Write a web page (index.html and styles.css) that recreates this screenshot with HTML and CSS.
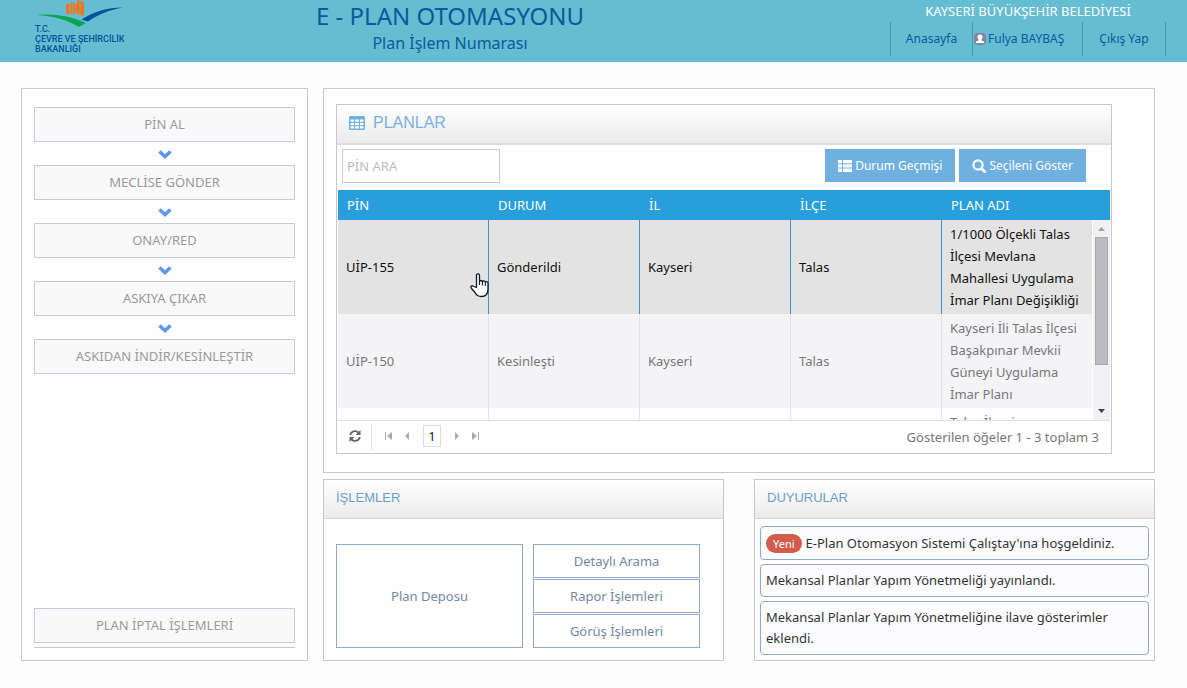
FILE: index.html
```html
<!DOCTYPE html>
<html lang="tr">
<head>
<meta charset="utf-8">
<meta name="viewport" content="width=device-width, initial-scale=1">
<title>E - Plan Otomasyonu</title>
<link rel="stylesheet" href="styles.css">
</head>
<body>
<header class="topbar">
  <a class="logo" href="#">
    <svg class="logo-mark" viewBox="0 0 90 27" width="90" height="27" aria-hidden="true">
      <path fill="#ee7623" d="M31 4.500l3-1v10l-3 1zM36 2l4 1v12l-4-1zM34.500 4h1v10h-1zM42 0l7 2v14l-7-2zM40.500 4h1.500v9h-1.500z"/>
      <path stroke="#65bdd2" stroke-width=".7" d="M45 0v16M37.800 2v13" fill="none"/>
      <path fill="#0ba551" d="M2 15c18-1.500 33 1 49 8l-7 4C33 20.500 20 16 2 15z"/>
      <path fill="#04529c" d="M46.500 19.500C59 11.500 72 7.500 88 7.500 74 10 64 14 53 21.500z"/>
    </svg>
    <span>T.C.</span>
    <span>ÇEVRE VE ŞEHİRCİLİK</span>
    <span>BAKANLIĞI</span>
  </a>
  <div class="titles">
    <h1>E - PLAN OTOMASYONU</h1>
    <p>Plan İşlem Numarası</p>
  </div>
  <div class="account">
    <p>KAYSERİ BÜYÜKŞEHİR BELEDİYESİ</p>
    <nav class="account-nav">
      <a href="#">Anasayfa</a>
      <a href="#" class="user">
        <svg viewBox="0 0 14 14" width="14" height="14" aria-hidden="true"><rect x="1" y="1" width="12" height="12" rx="4" fill="#85859f"/><circle cx="7" cy="5" r="2.500" fill="#fff"/><path fill="#fff" d="M5.500 6h3v2.500l2.500 1v1.500H3V9.500l2.500-1z"/></svg>Fulya BAYBAŞ</a>
      <a href="#">Çıkış Yap</a>
    </nav>
  </div>
</header>

<main class="layout">
  <aside class="steps box">
    <button type="button">PİN AL</button>
    <svg class="chev" viewBox="0 0 14 9" width="14" height="9"><path d="M1.500 1.500l5.500 5 5.500-5" fill="none" stroke="#6495ed" stroke-width="3.600"/></svg>
    <button type="button">MECLİSE GÖNDER</button>
    <svg class="chev" viewBox="0 0 14 9" width="14" height="9"><path d="M1.500 1.500l5.500 5 5.500-5" fill="none" stroke="#6495ed" stroke-width="3.600"/></svg>
    <button type="button">ONAY/RED</button>
    <svg class="chev" viewBox="0 0 14 9" width="14" height="9"><path d="M1.500 1.500l5.500 5 5.500-5" fill="none" stroke="#6495ed" stroke-width="3.600"/></svg>
    <button type="button">ASKIYA ÇIKAR</button>
    <svg class="chev" viewBox="0 0 14 9" width="14" height="9"><path d="M1.500 1.500l5.500 5 5.500-5" fill="none" stroke="#6495ed" stroke-width="3.600"/></svg>
    <button type="button">ASKIDAN İNDİR/KESİNLEŞTİR</button>
    <div class="steps-foot"><button type="button">PLAN İPTAL İŞLEMLERİ</button></div>
  </aside>

  <section class="plans box">
    <div class="grid-card">
      <h2 class="card-head planlar">
        <svg viewBox="0 0 16 14" width="16" height="14" aria-hidden="true"><rect width="16" height="14" rx="1.500" fill="#6fb0e0"/><path fill="#fff" d="M1.500 3.500h3.500v2.300H1.500zM6 3.500h4v2.300H6zM11 3.500h3.500v2.300H11zM1.500 6.900h3.500v2.300H1.500zM6 6.900h4v2.300H6zM11 6.900h3.500v2.300H11zM1.500 10.300h3.500v2.300H1.500zM6 10.300h4v2.300H6zM11 10.300h3.500v2.300H11z"/></svg>
        PLANLAR</h2>
      <div class="toolbar">
        <input type="text" placeholder="PİN ARA" aria-label="PİN ARA">
        <div class="actions">
          <button type="button"><svg viewBox="0 0 14 12" width="14" height="12" aria-hidden="true"><path fill="#fff" d="M0 0h4v3.300H0zM5 0h9v3.300H5zM0 4.300h4v3.300H0zM5 4.300h9v3.300H5zM0 8.600h4V12H0zM5 8.600h9V12H5z"/></svg>Durum Geçmişi</button>
          <button type="button"><svg viewBox="0 0 14 14" width="14" height="14" aria-hidden="true"><circle cx="6" cy="6" r="4.600" fill="none" stroke="#fff" stroke-width="2.200"/><path d="M9.500 9.500l3.500 3.500" stroke="#fff" stroke-width="2.600" stroke-linecap="round"/></svg>Seçileni Göster</button>
        </div>
      </div>
      <div class="thead">
        <table>
          <thead><tr><th>PİN</th><th>DURUM</th><th>İL</th><th>İLÇE</th><th>PLAN ADI</th></tr></thead>
        </table>
      </div>
      <div class="tbody">
        <div class="rows">
          <table>
            <tbody>
              <tr class="selected">
                <td>UİP-155
                  <svg class="pointer" viewBox="0 0 19 25" width="19" height="25" aria-hidden="true"><path d="M6.500 14.500V2.500q0-1.700 1.500-1.700t1.500 1.700v6q.2-1 1.400-1t1.500 1.200q.3-.8 1.300-.8 1.300 0 1.600 1.300.4-.6 1.300-.6 1.400 0 1.400 1.700V16q0 7.500-6.600 7.500-4.500 0-6.400-4L1.200 15q-.7-1.500.6-2.100 1-.4 2 .6z" fill="#fff" stroke="#111827" stroke-width="1.300" stroke-linejoin="round"/><path d="M9.500 8v4M12.400 9v3.500M15.300 9.500V13" stroke="#111827" stroke-width="1.100"/></svg>
                </td>
                <td>Gönderildi</td><td>Kayseri</td><td>Talas</td>
                <td>1/1000 Ölçekli Talas İlçesi Mevlana Mahallesi Uygulama İmar Planı Değişikliği</td>
              </tr>
              <tr class="alt">
                <td>UİP-150</td><td>Kesinleşti</td><td>Kayseri</td><td>Talas</td>
                <td>Kayseri İli Talas İlçesi Başakpınar Mevkii Güneyi Uygulama İmar Planı</td>
              </tr>
              <tr>
                <td></td><td></td><td></td><td></td>
                <td>Talas İlçesi</td>
              </tr>
            </tbody>
          </table>
        </div>
        <div class="scrollbar">
          <svg viewBox="0 0 7 4" width="7" height="4"><path d="M0 4l3.500-4L7 4z" fill="#a3a3a3"/></svg>
          <div class="thumb"></div>
          <svg viewBox="0 0 7 4" width="7" height="4"><path d="M0 0l3.500 4L7 0z" fill="#404040"/></svg>
        </div>
      </div>
      <div class="pager">
        <button type="button" class="refresh" aria-label="Yenile"><svg viewBox="0 0 12 12" width="12" height="12"><path d="M1.200 5A4.800 4.800 0 0 1 9.500 2.700M10.800 7A4.800 4.800 0 0 1 2.500 9.300" fill="none" stroke="#666" stroke-width="1.800"/><path fill="#666" d="M11.500 0v5h-5zM.5 12V7h5z"/></svg></button>
        <button type="button" aria-label="İlk sayfa"><svg viewBox="0 0 8 8" width="8" height="8"><path fill="#aaa" d="M0 0h1v8H0zM7 0v8L2 4z"/></svg></button>
        <button type="button" aria-label="Önceki sayfa"><svg viewBox="0 0 8 8" width="8" height="8"><path fill="#aaa" d="M6 0v8L2 4z"/></svg></button>
        <span class="page">1</span>
        <button type="button" aria-label="Sonraki sayfa"><svg viewBox="0 0 8 8" width="8" height="8"><path fill="#aaa" d="M2 0v8l4-4z"/></svg></button>
        <button type="button" aria-label="Son sayfa"><svg viewBox="0 0 8 8" width="8" height="8"><path fill="#aaa" d="M7 0h1v8H7zM1 0v8l5-4z"/></svg></button>
        <span class="count">Gösterilen öğeler 1 - 3 toplam 3</span>
      </div>
    </div>
  </section>

  <div class="bottom">
    <section class="box">
      <h2 class="card-head">İŞLEMLER</h2>
      <div class="ops">
        <button type="button" class="big">Plan Deposu</button>
        <button type="button">Detaylı Arama</button>
        <button type="button">Rapor İşlemleri</button>
        <button type="button">Görüş İşlemleri</button>
      </div>
    </section>
    <section class="box">
      <h2 class="card-head">DUYURULAR</h2>
      <ul class="news">
        <li><span class="badge">Yeni</span>E-Plan Otomasyon Sistemi Çalıştay'ına hoşgeldiniz.</li>
        <li>Mekansal Planlar Yapım Yönetmeliği yayınlandı.</li>
        <li>Mekansal Planlar Yapım Yönetmeliğine ilave gösterimler eklendi.</li>
      </ul>
    </section>
  </div>
</main>
</body>
</html>
```
FILE: styles.css
```css
* { box-sizing: border-box; }
body {
  margin: 0;
  background: #fdfdfd;
  color: #333;
  font: 13px/22px "Noto Sans", "Open Sans", sans-serif;
}
h1, h2, p, ul { margin: 0; padding: 0; font-weight: 400; }
button, input { font: inherit; }
button { padding: 0; cursor: pointer; }
a { color: inherit; text-decoration: none; }
svg { display: block; flex: none; }

.topbar {
  display: grid;
  grid-template-columns: 281px auto 1fr;
  height: 62px;
  padding: 0 21px 0 35px;
  background: #65bdd2;
  color: #0b5a9b;
}
.logo {
  display: flex;
  flex-direction: column;
  font: 500 9px/10px Roboto, sans-serif;
  color: #04529c;
  white-space: nowrap;
}
.logo-mark { margin-bottom: -3px; }
.titles { text-align: center; }
.titles h1 { font-size: 24px; line-height: 32px; }
.titles p { font-size: 16px; line-height: 22px; }
.account { justify-self: end; text-align: center; }
.account p { color: #fff; font-size: 13px; line-height: 22px; }
.account-nav {
  display: grid;
  grid-template-columns: 82px 110px 83px;
  height: 34px;
  font-size: 12px;
  line-height: 34px;
  border-left: 1px solid #3f9bb5;
}
.account-nav a { border-right: 1px solid #3f9bb5; }
.account-nav .user {
  display: flex;
  align-items: center;
  gap: 1px;
}

.layout {
  display: grid;
  grid-template-columns: 287px 1fr;
  gap: 6px 15px;
  padding: 26px 32px 27px 21px;
}
.box { border: 1px solid #c8c8cc; background: #fefefe; }
.steps {
  grid-row: span 2;
  display: flex;
  flex-direction: column;
  padding: 18px 12px 12px;
}
.steps button {
  width: 100%;
  height: 35px;
  padding-bottom: 2px;
  border: 1px solid #c5c9d8;
  background: #f9f9f9;
  color: #999;
}
.chev { margin: 8px auto 6px; }
.steps-foot {
  margin-top: auto;
  padding-bottom: 4px;
  border-bottom: 1px solid #c8c8cc;
}

.plans { padding: 15px 42px 18px 12px; }
.grid-card { border: 1px solid #c8c8cc; }
.card-head {
  height: 39px;
  padding: 0 12px;
  border-bottom: 1px solid #d5d5d8;
  background: linear-gradient(#fff, #ebebed);
  color: #6a9fc8;
  font: 13px/36px "Liberation Sans", sans-serif;
}
.planlar {
  display: flex;
  align-items: center;
  gap: 8px;
  height: 40px;
  padding-bottom: 2px;
  border-bottom: 2px solid #dedee0;
  color: #7ab0dc;
  font-size: 16px;
}
.toolbar {
  display: flex;
  justify-content: space-between;
  height: 45px;
  padding: 4px 25px 0 5px;
}
.toolbar input {
  width: 158px;
  height: 34px;
  padding: 0 4px;
  border: 1px solid #ccc;
  border-radius: 0;
  background: #fff;
}
.toolbar input::placeholder { color: #bbb; opacity: 1; }
.actions { display: flex; gap: 4px; }
.actions button {
  display: flex;
  align-items: center;
  gap: 3px;
  height: 33px;
  padding: 1px 13px 0;
  border: 0;
  background: #6fb0e0;
  color: #fff;
  font-size: 12px;
}

table {
  width: 100%;
  table-layout: fixed;
  border-collapse: separate;
  border-spacing: 0;
}
.thead { margin: 0 1px; padding-right: 17px; background: #289fdc; color: #fff; }
th {
  height: 30px;
  padding: 0 9px;
  font-weight: 400;
  text-align: left;
}
.tbody { display: flex; height: 200px; margin: 0 1px; }
.rows { flex: 1; overflow: hidden; }
td {
  position: relative;
  padding: 3px 8px;
  border-right: 1px solid #e2e2e5;
  color: #777;
}
td:last-child { border-right-color: #fff; }
.alt td { background: #f4f4f7; }
.selected td { background: #e3e3e3; border-color: #3a95c8; color: #111; }
.selected td:last-child { border-color: #fff; }
.pointer { position: absolute; right: -1px; top: 53px; }
.scrollbar {
  display: flex;
  flex-direction: column;
  align-items: center;
  width: 17px;
  padding: 7px 0;
  background: #f1f1f3;
}
.scrollbar svg:last-child { margin-top: auto; }
.thumb { width: 13px; height: 128px; margin-top: 6px; border: 1px solid #a8a8a8; background: #bcbcbe; }
.pager {
  display: flex;
  align-items: center;
  height: 33px;
  margin: 0 1px;
  padding-right: 11px;
  border-top: 1px solid #dedee0;
  color: #777;
}
.pager button {
  display: grid;
  place-items: center;
  width: 18px;
  height: 26px;
  padding-bottom: 2px;
  border: 0;
  background: none;
}
.pager .refresh {
  width: 34px;
  margin-right: 8px;
  border-right: 1px solid #dedee0;
}
.page {
  width: 18px;
  margin: 0 7px 2px;
  border: 1px solid #dedee0;
  line-height: 20px;
  text-align: center;
  color: #222;
}
.count { margin-left: auto; }

.bottom { display: grid; grid-template-columns: 1fr 1fr; gap: 30px; }
.ops {
  display: grid;
  grid-template-columns: 187fr 167fr;
  grid-auto-rows: 34px;
  gap: 1px 10px;
  padding: 25px 23px 12px 12px;
}
.ops button { border: 1px solid #8faac8; background: #fefefe; color: #7388a0; }
.ops .big { grid-row: span 3; }
.news {
  display: grid;
  gap: 4px;
  padding: 7px 5px 5px;
  list-style: none;
  line-height: 21px;
}
.news li {
  padding: 5px;
  border: 1px solid #8faac8;
  border-radius: 4px;
  background: #fcfcff;
}
.news li:first-child { padding-top: 6px; }
.badge {
  display: inline-block;
  margin-right: 4px;
  padding: 0 7px;
  border-radius: 10px;
  background: #d35b4b;
  color: #fff;
  font-size: 11px;
  line-height: 19px;
}
```
